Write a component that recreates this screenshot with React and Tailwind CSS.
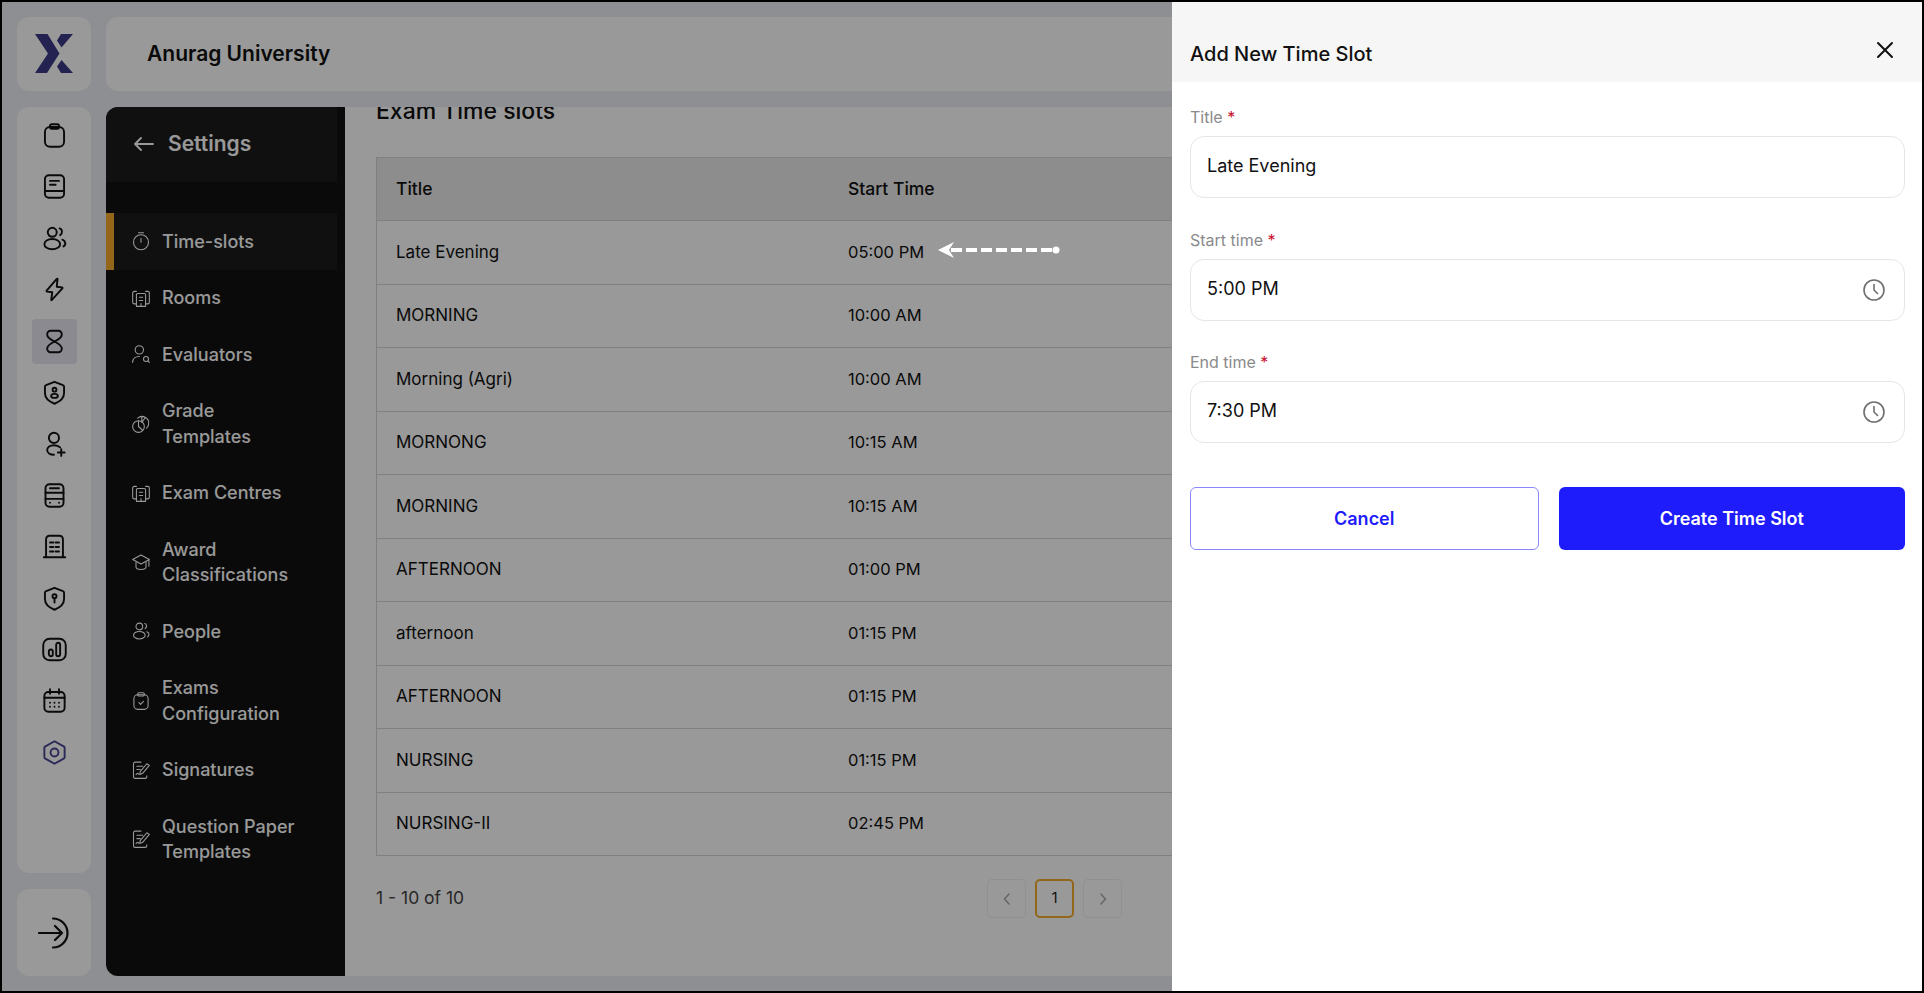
import React from 'react';

const Svg = ({ size = 24, sw = 1.8, color = 'currentColor', children }) => (
  <svg width={size} height={size} viewBox="0 0 24 24" fill="none" stroke={color} strokeWidth={sw} strokeLinecap="round" strokeLinejoin="round" className="shrink-0">
    {children}
  </svg>
);

const shield = 'M12 2.5 19.5 5.5c.6.2 1 .8 1 1.4v5.6c0 4.6-3.6 7.6-8.5 9.5-4.900-1.900-8.500-4.900-8.500-9.500V6.900c0-.6.4-1.200 1-1.400z';

const icons = {
  clipboard: (
    <>
      <rect x="3.5" y="4.500" width="17" height="17.500" rx="4.500" />
      <rect x="8" y="2" width="8" height="4" rx="1.500" />
    </>
  ),
  book: (
    <>
      <rect x="3.500" y="2" width="17" height="20" rx="3.500" />
      <path d="M3.500 16h17M8 7h8M8 10.500h5" />
    </>
  ),
  users: (
    <>
      <circle cx="10" cy="6.500" r="4" />
      <ellipse cx="10" cy="17" rx="7" ry="4.500" />
      <path d="M16.500 3c2.500.5 3 4.500.5 6M19 13c3 1 3.500 4.500 1 6" />
    </>
  ),
  flash: <path d="M14 2.500 5 13c-.3.400 0 .8.400.9l4.600.600-.9 6.500c-.1.500.3.700.6.300L19 11c.3-.4.100-.8-.4-.9l-4.600-.600.7-6.700c.1-.4-.4-.600-.7-.300z" />,
  hourglass: (
    <>
      <path d="M12 12c4-2 6.500-3.800 6.500-6.300 0-2-1.500-3.200-3-3.200h-7c-1.500 0-3 1.200-3 3.200 0 2.500 2.500 4.300 6.500 6.300z" />
      <path d="M12 12c4 2 6.500 3.800 6.500 6.300 0 2-1.500 3.200-3 3.200h-7c-1.500 0-3-1.200-3-3.200 0-2.500 2.500-4.300 6.500-6.300z" />
    </>
  ),
  shieldUser: (
    <>
      <path d={shield} />
      <circle cx="12" cy="9.500" r="1.700" />
      <ellipse cx="12" cy="15" rx="3" ry="1.800" />
    </>
  ),
  userAdd: (
    <>
      <circle cx="11.500" cy="7" r="4.500" />
      <path d="M17 15.500c-1.300-1.300-3.200-2-5.500-2-3.500 0-6 1.900-6 4.300s2.500 4.200 6 4.200M15 20h6M18 17v6" />
    </>
  ),
  bus: (
    <>
      <rect x="4" y="2" width="16" height="20" rx="3.500" />
      <path d="M8 5.500h8M4 9.500h16M4 15h16M8 18.500h.01M16 18.500h.01" />
    </>
  ),
  building: (
    <path d="M4.500 21.500V5.500a3 3 0 0 1 3-3h9a3 3 0 0 1 3 3v16M2.500 21.500h19M8 8.500h3M13 8.500h3M8 12.500h3M13 12.500h3M8 16.500h3M13 16.500h3" />
  ),
  shieldKey: (
    <>
      <path d={shield} />
      <circle cx="12" cy="10" r="1.800" />
      <path d="M12 12v3.500" />
    </>
  ),
  chart: (
    <>
      <rect x="2" y="2.500" width="20" height="19" rx="5.500" />
      <rect x="7" y="12" width="3.500" height="6" rx="1.750" />
      <rect x="13.500" y="6" width="3.500" height="12" rx="1.750" />
    </>
  ),
  calendar: (
    <>
      <rect x="3" y="4.500" width="18" height="17.500" rx="3.500" />
      <path d="M8 2v4M16 2v4M3 9.500h18M8 14h.01M12 14h.01M16 14h.01M8 17.500h.01M12 17.500h.01M16 17.500h.01" />
    </>
  ),
  hexagon: (
    <>
      <path d="M12 2 20.500 6.800c.3.200.5.500.5.900v8.600c0 .4-.2.7-.5.900L12 22l-8.500-4.800c-.3-.2-.5-.5-.5-.9V7.700c0-.4.200-.7.500-.9z" />
      <circle cx="12" cy="12" r="3.500" />
    </>
  ),
  timer: (
    <>
      <circle cx="12" cy="13.500" r="9" />
      <path d="M9 2h6M12 9v4.500" />
    </>
  ),
  rooms: (
    <>
      <path d="M8 6.500h8a1.500 1.500 0 0 1 1.500 1.500v14h-11V8A1.500 1.500 0 0 1 8 6.500z" />
      <path d="M6.500 4H4a2 2 0 0 0-2 2v11a2 2 0 0 0 2 2h2.500M17.500 4H20a2 2 0 0 1 2 2v11a2 2 0 0 1-2 2h-2.500M10 11h4M10 15h4M12 18.500V22" />
    </>
  ),
  evaluator: (
    <>
      <circle cx="10" cy="7" r="5" />
      <path d="M2 22c0-4.500 3.500-7 8-7" />
      <circle cx="18" cy="18" r="3" />
      <path d="m20.500 20.500 1.500 1.500" />
    </>
  ),
  grade: (
    <>
      <circle cx="9" cy="15" r="7" />
      <path d="M8 5a8 8 0 0 1 13 8c-.3 1.500-1 3-2.500 4M13 3v7M17 4.500l-4 5.500M9 8v7l5 4.500" />
    </>
  ),
  cap: (
    <>
      <path d="M12 3.500 2 9l10 5.500L22 9z" />
      <path d="M6 12v6c0 1.500 2.500 3 6 3s6-1.500 6-3v-6M21.500 9.500V17" />
    </>
  ),
  clipCheck: (
    <>
      <rect x="3.500" y="4.500" width="17" height="17.500" rx="4.500" />
      <rect x="8" y="2" width="8" height="4" rx="1.500" />
      <path d="m9.500 14 2 2 3.500-3.500" />
    </>
  ),
  sign: (
    <>
      <path d="M12 2.500H5a2 2 0 0 0-2 2V20a2 2 0 0 0 2 2h12a2 2 0 0 0 2-2v-1M7 7.500h7M7 11.500h4" />
      <path d="M22 6.500 14 16l-3.500 1.500.5-3.500 8-9.500zM6 17.500c1-1.500 2-2 3-.5" />
    </>
  ),
};

const railIcons = ['clipboard', 'book', 'users', 'flash', 'hourglass', 'shieldUser', 'userAdd', 'bus', 'building', 'shieldKey', 'chart', 'calendar', 'hexagon'];

const settingsItems = [
  { icon: 'timer', lines: ['Time-slots'], active: true },
  { icon: 'rooms', lines: ['Rooms'] },
  { icon: 'evaluator', lines: ['Evaluators'] },
  { icon: 'grade', lines: ['Grade', 'Templates'] },
  { icon: 'rooms', lines: ['Exam Centres'] },
  { icon: 'cap', lines: ['Award', 'Classifications'] },
  { icon: 'users', lines: ['People'] },
  { icon: 'clipCheck', lines: ['Exams', 'Configuration'] },
  { icon: 'sign', lines: ['Signatures'] },
  { icon: 'sign', lines: ['Question Paper', 'Templates'] },
];

const rows = [
  ['Late Evening', '05:00 PM'],
  ['MORNING', '10:00 AM'],
  ['Morning (Agri)', '10:00 AM'],
  ['MORNONG', '10:15 AM'],
  ['MORNING', '10:15 AM'],
  ['AFTERNOON', '01:00 PM'],
  ['afternoon', '01:15 PM'],
  ['AFTERNOON', '01:15 PM'],
  ['NURSING', '01:15 PM'],
  ['NURSING-II', '02:45 PM'],
];

const Clock = () => (
  <svg width="24" height="24" viewBox="0 0 24 24" fill="none" stroke="#6f6f6f" strokeWidth="1.600" strokeLinecap="round" strokeLinejoin="round" className="shrink-0">
    <circle cx="12" cy="12" r="10" />
    <path d="M12 6.500V12l3.500 3.500" />
  </svg>
);

const Field = ({ label, value, clock }) => (
  <div>
    <label className="block text-[16px] leading-6 text-[#8a8a8a] mb-[7px]">
      {label} <span className="text-[#c8102e]">*</span>
    </label>
    <div className="flex items-center h-[62px] border border-[#e6e6e6] rounded-[14px] pl-[16px] pr-[18px]">
      <input readOnly value={value} className="flex-1 min-w-0 pb-[3px] text-[18px] text-[#111] outline-none bg-transparent" />
      {clock && <Clock />}
    </div>
  </div>
);

export default function App() {
  return (
    <div className="relative w-[1924px] h-[993px] overflow-hidden border-2 border-black bg-[#edeef3] font-['Inter',sans-serif]">
      <div className="flex gap-[15px] h-full pl-[15px] pr-[12px] pt-[15px] pb-[15px]">
        {/* Icon rail */}
        <div className="flex flex-col gap-4 w-[74px] shrink-0">
          <div className="flex items-center justify-center h-[74px] bg-white rounded-[12px]">
            <svg width="38" height="40" viewBox="0 0 38 40" fill="#3d3985">
              <path d="M0 0h12.500l12 19.500L12 39H0l13-19.500z" />
              <path d="M38 0H26l-4 6.500 4.500 7zM26.500 26 38 39H26l-4-6.500z" />
            </svg>
          </div>
          <div className="flex-1 bg-white rounded-[12px] flex flex-col items-center pt-[6px] gap-[6.400px]">
            {railIcons.map((name) => (
              <div key={name} className={`flex items-center justify-center w-[45px] h-[45px] rounded-[4px] ${name === 'hourglass' ? 'bg-[#e6e6f0]' : ''}`}>
                <Svg size={27} color={name === 'hexagon' ? '#494690' : '#111'} sw={1.700}>{icons[name]}</Svg>
              </div>
            ))}
          </div>
          <div className="flex items-center justify-center h-[87px] bg-white rounded-[12px]">
            <svg width="32" height="32" viewBox="0 0 32 32" fill="none" stroke="#111" strokeWidth="2.200" strokeLinecap="round" strokeLinejoin="round">
              <path d="M1 16h23M17 9l7 7-7 7M15 1.500a14.500 14.500 0 0 1 0 29" />
            </svg>
          </div>
        </div>

        <div className="flex flex-col gap-4 flex-1 min-w-0">
          {/* Top header */}
          <div className="flex items-center h-[74px] bg-white rounded-[12px] pl-[41px] shrink-0">
            <span className="text-[21px] font-semibold text-[#111]">Anurag University</span>
          </div>

          <div className="flex flex-1 min-h-0">
            {/* Settings panel */}
            <div className="flex w-[239px] shrink-0 bg-[#111] rounded-l-[12px] overflow-hidden">
              <div className="w-[231px]">
                <div className="flex items-center gap-[14px] h-[75px] pl-[28px] pb-[2px] bg-[#1c1c1c] text-white">
                  <svg width="20" height="14" viewBox="0 0 20 14" fill="none" stroke="currentColor" strokeWidth="1.800" strokeLinecap="round" strokeLinejoin="round">
                    <path d="M19 7H1M7 1 1 7l6 6" />
                  </svg>
                  <span className="text-[21px] font-semibold">Settings</span>
                </div>
                <div className="mt-[31px]">
                  {settingsItems.map((item) => (
                    <div key={item.lines[0]} className={`flex items-center gap-[11px] py-[15.500px] text-white border-l-[8px] pl-[17px] ${item.active ? 'border-[#f5ab2a] bg-[#1c1c1c]' : 'border-transparent'}`}>
                      <Svg size={20} sw={1.300}>{icons[item.icon]}</Svg>
                      <div className="text-[18px] leading-[25.500px] font-medium">
                        {item.lines.map((l) => <div key={l}>{l}</div>)}
                      </div>
                    </div>
                  ))}
                </div>
              </div>
            </div>

            {/* Time slots table */}
            <div className="flex-1 min-w-0 bg-white overflow-hidden pl-[31px] pr-[31px]">
              <h2 className="-mt-[10px] h-[28px] leading-[28px] text-[23px] font-medium text-[#111] mb-[32px]">Exam Time slots</h2>
              <div className="border-t border-l border-[#d6d6d6]">
                <div className="flex items-center h-[63px] bg-[#ebebeb] border-b border-[#d6d6d6] text-[17.500px] font-medium text-[#111]">
                  <div className="w-[471px] pl-[19px]">Title</div>
                  <div>Start Time</div>
                </div>
                {rows.map((r, i) => (
                  <div key={i} className="flex items-center h-[63.500px] border-b border-[#d6d6d6] text-[17px] text-[#111]">
                    <div className="w-[471px] pl-[19px]">{r[0]}</div>
                    <div className="text-[16.500px]">{r[1]}</div>
                  </div>
                ))}
              </div>
              <div className="flex items-center mt-[23px]">
                <div className="w-[611px] text-[17.500px] text-[#444]">1 - 10 of 10</div>
                <div className="flex gap-[9px]">
                  <div className="flex items-center justify-center w-[39px] h-[39px] border border-[#f0f0f0] rounded-[5px] text-[#aaa]">
                    <svg width="14" height="14" viewBox="0 0 14 14" fill="none" stroke="currentColor" strokeWidth="1.500" strokeLinecap="round" strokeLinejoin="round"><path d="M9 2 4.500 7 9 12" /></svg>
                  </div>
                  <div className="flex items-center justify-center w-[39px] h-[39px] border-2 border-[#f5ab2a] rounded-[5px] bg-[#fff] text-[15px] text-[#222]">1</div>
                  <div className="flex items-center justify-center w-[39px] h-[39px] border border-[#f0f0f0] rounded-[5px] text-[#aaa]">
                    <svg width="14" height="14" viewBox="0 0 14 14" fill="none" stroke="currentColor" strokeWidth="1.500" strokeLinecap="round" strokeLinejoin="round"><path d="m5 2 4.500 5L5 12" /></svg>
                  </div>
                </div>
              </div>
            </div>
          </div>
        </div>
      </div>

      {/* Modal backdrop */}
      <div className="absolute inset-0 bg-black/40" />

      {/* Annotation arrow */}
      <svg className="absolute left-[936px] top-[240px]" width="130" height="16" viewBox="0 0 130 16" fill="white">
        <path d="M0 8 16 0l-5 8 5 8z" />
        <path d="M13 8h104" stroke="white" strokeWidth="4" strokeDasharray="11 4" />
        <circle cx="118" cy="8" r="3.500" />
      </svg>

      {/* Add time slot drawer */}
      <div className="absolute top-0 right-0 bottom-0 w-[750px] bg-white">
        <div className="flex justify-between items-start h-[80px] bg-[#f6f6f6] pl-[18px] pr-[27px] pt-[38px]">
          <span className="text-[20px] leading-[28px] font-medium text-[#111]">Add New Time Slot</span>
          <svg width="20" height="20" viewBox="0 0 20 20" fill="none" stroke="#111" strokeWidth="2" strokeLinecap="round"><path d="m3 3 14 14M17 3 3 17" /></svg>
        </div>
        <div className="flex flex-col gap-[29.500px] pl-[18px] pr-[17px] pt-[23px]">
          <Field label="Title" value="Late Evening" />
          <Field label="Start time" value="5:00 PM" clock />
          <Field label="End time" value="7:30 PM" clock />
        </div>
        <div className="flex gap-[20px] pl-[18px] pr-[17px] mt-[44px]">
          <button className="flex-1 h-[63px] border border-[#8a88fb] rounded-[6px] text-[#1f1cfb] text-[18px] font-semibold">Cancel</button>
          <button className="flex-1 h-[63px] rounded-[6px] bg-[#1f1cfb] text-white text-[18px] font-semibold">Create Time Slot</button>
        </div>
      </div>
    </div>
  );
}
